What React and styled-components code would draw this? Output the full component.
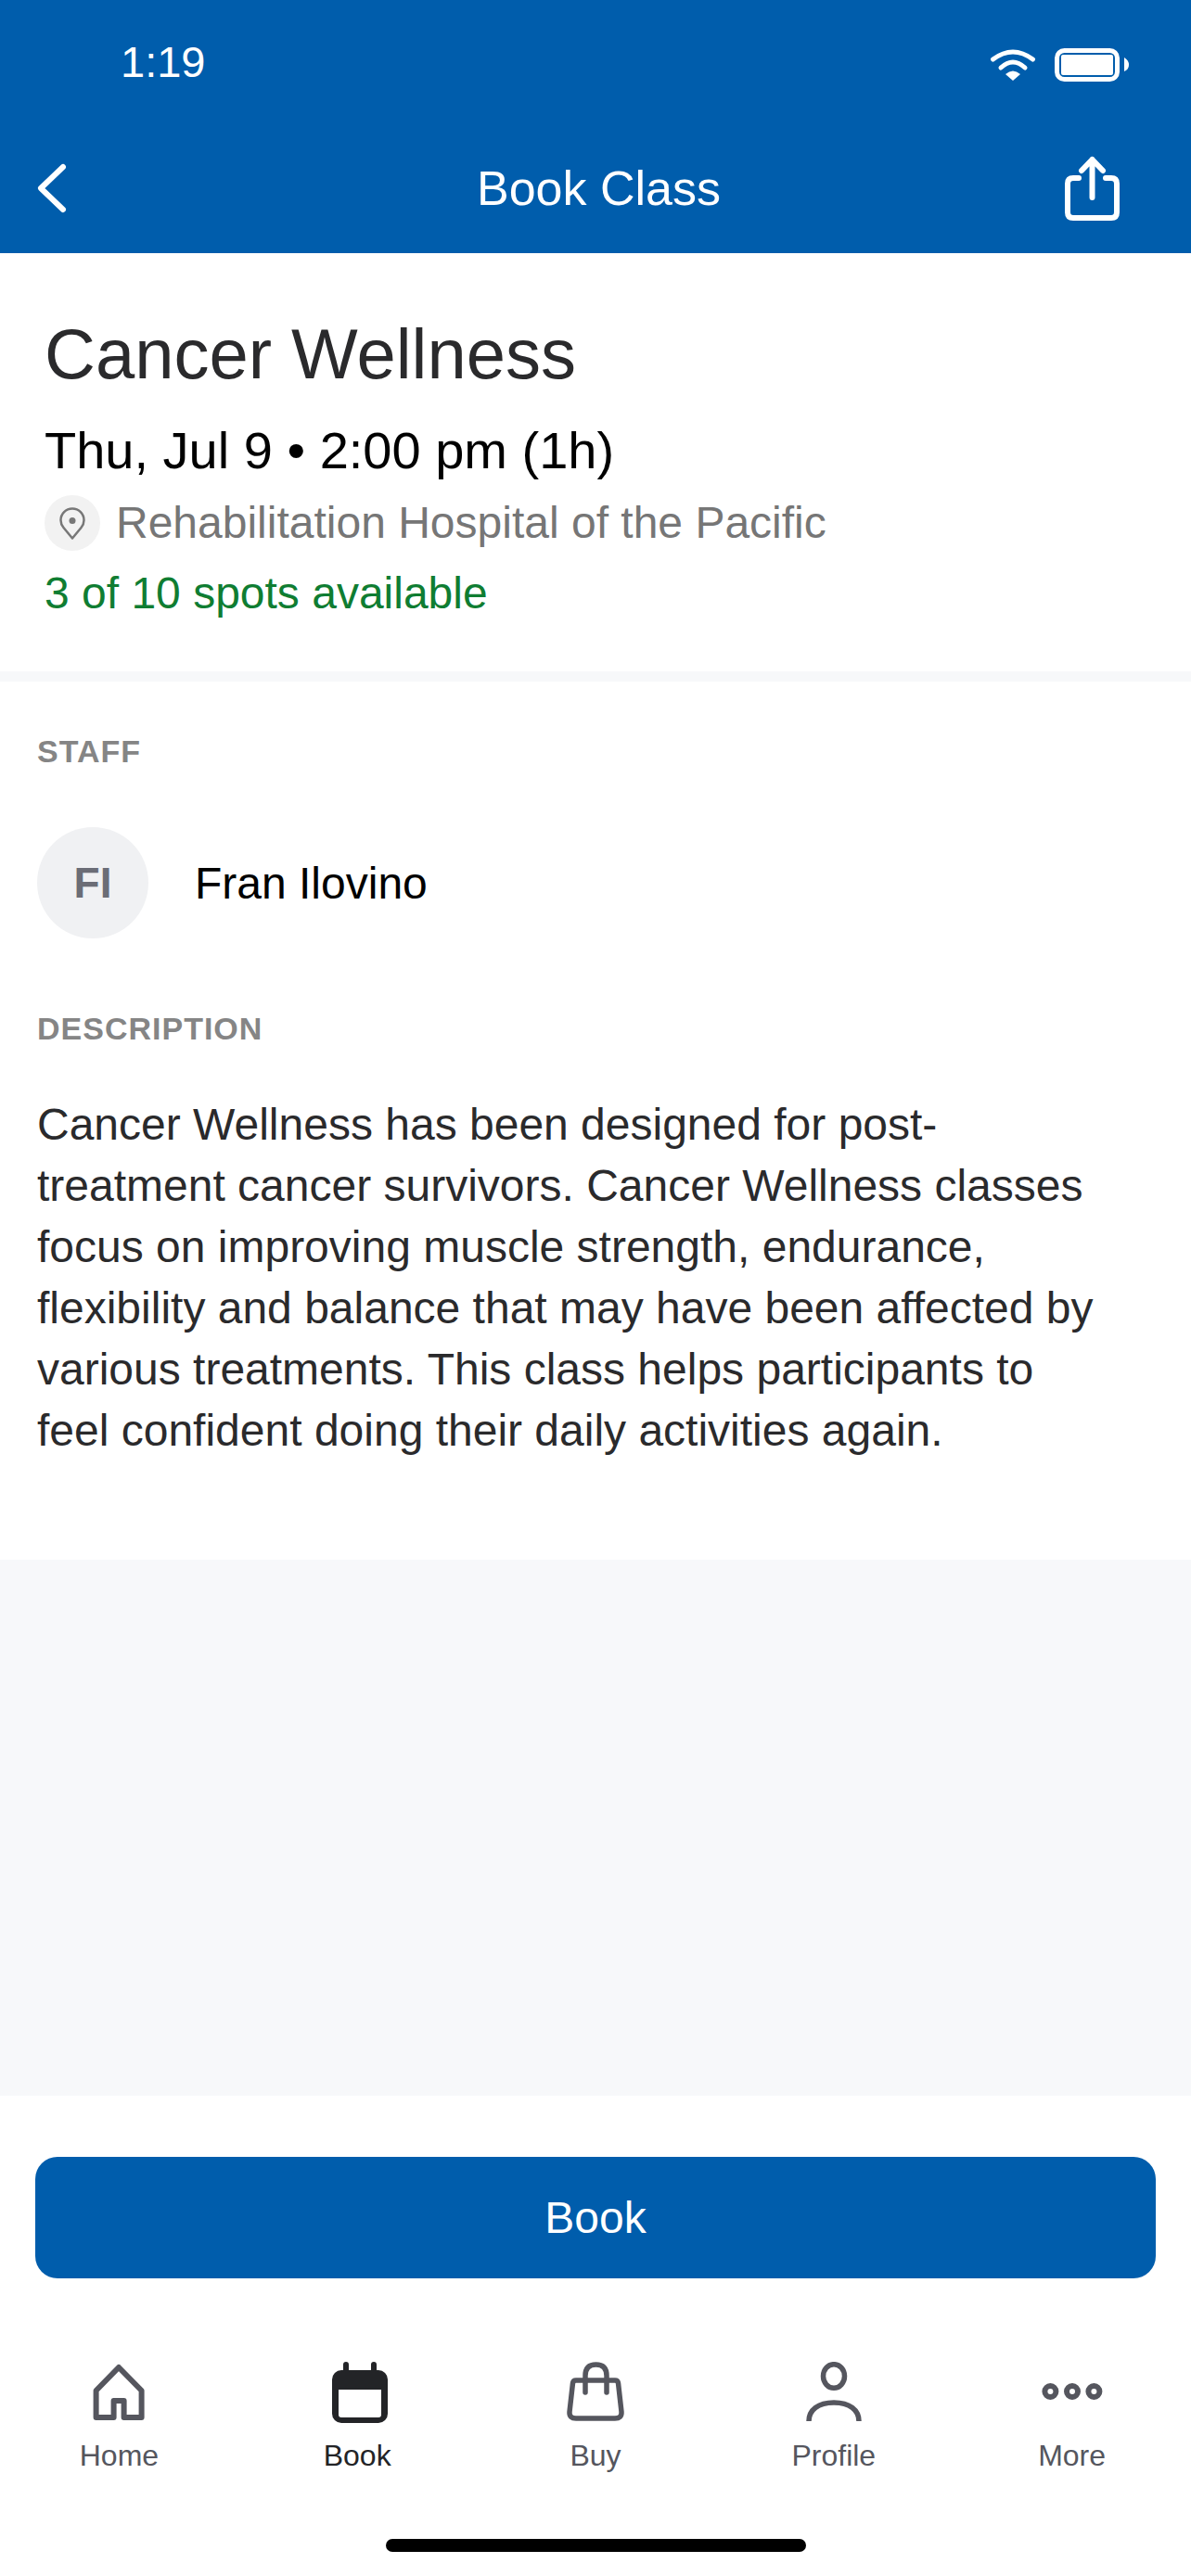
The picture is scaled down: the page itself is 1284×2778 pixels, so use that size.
import React from 'react';
import styled, { createGlobalStyle } from 'styled-components';

const GlobalStyle = createGlobalStyle`
    html, body {
        margin: 0;
        padding: 0;
        background: #ffffff;
    }
    body {
        font-family: "Liberation Sans", Arial, sans-serif;
    }
    * {
        box-sizing: border-box;
    }
`;

const Screen = styled.div`
    width: 1284px;
    height: 2778px;
    display: flex;
    flex-direction: column;
    background: #ffffff;
    overflow: hidden;
`;

const Header = styled.header`
    height: 273px;
    background: #005dac;
    color: #ffffff;
    display: flex;
    flex-direction: column;
`;

const StatusBar = styled.div`
    height: 132px;
    padding: 0 67px 0 130px;
    display: flex;
    align-items: center;
    justify-content: space-between;
`;

const Time = styled.span`
    font-size: 47px;
`;

const StatusIcons = styled.div`
    margin-top: 8px;
    display: flex;
    align-items: center;
    gap: 20px;
`;

const NavBar = styled.div`
    flex: 1;
    padding: 0 77px 0 38px;
    display: grid;
    grid-template-columns: 1fr auto 1fr;
    align-items: center;
`;

const NavTitle = styled.h1`
    margin: 0 0 0 46px;
    font-size: 52px;
    font-weight: 400;
`;

const ShareSlot = styled.div`
    display: flex;
    justify-content: flex-end;
`;

const ClassInfo = styled.section`
    height: 462px;
    padding: 66px 48px 0;
    border-bottom: 11px solid #f7f8fa;
`;

const ClassTitle = styled.h2`
    margin: 0;
    font-size: 76px;
    line-height: 86px;
    font-weight: 400;
    color: #2a2a2c;
`;

const ClassTime = styled.div`
    margin-top: 28px;
    font-size: 56px;
    line-height: 66px;
    color: #000000;
`;

const Location = styled.div`
    margin-top: 15px;
    display: flex;
    align-items: center;
    gap: 17px;
    font-size: 48px;
    line-height: 60px;
    color: #767676;
`;

const PinCircle = styled.span`
    width: 60px;
    height: 60px;
    border-radius: 50%;
    background: #f2f2f2;
    display: flex;
    align-items: center;
    justify-content: center;
`;

const Spots = styled.div`
    margin-top: 16px;
    font-size: 48px;
    line-height: 60px;
    color: #0f7d32;
`;

const Details = styled.section`
    height: 947px;
    padding: 55px 40px 0;
`;

const SectionLabel = styled.div`
    font-size: 34px;
    line-height: 40px;
    font-weight: 700;
    letter-spacing: 1px;
    color: #858585;
`;

const StaffRow = styled.div`
    margin: 62px 0 77px;
    display: flex;
    align-items: center;
    gap: 50px;
`;

const Avatar = styled.div`
    width: 120px;
    height: 120px;
    border-radius: 50%;
    background: #f0f1f3;
    color: #6b6d76;
    font-size: 46px;
    font-weight: 700;
    display: flex;
    align-items: center;
    justify-content: center;
`;

const StaffName = styled.span`
    font-size: 48px;
    color: #000000;
`;

const Description = styled.p`
    margin: 51px 0 0;
    font-size: 48px;
    line-height: 66px;
    color: #2a2a2c;
`;

const Spacer = styled.div`
    flex: 1;
    background: #f7f8fa;
`;

const Footer = styled.footer`
    height: 518px;
    padding: 66px 38px 0;
    display: flex;
    flex-direction: column;
`;

const BookButton = styled.button`
    width: 100%;
    height: 131px;
    flex-shrink: 0;
    border: 0;
    border-radius: 24px;
    background: #005dac;
    color: #ffffff;
    font-family: inherit;
    font-size: 48px;
`;

const TabBar = styled.nav`
    margin: 90px -38px 0;
    display: grid;
    grid-template-columns: repeat(5, 1fr);
`;

const Tab = styled.div`
    display: flex;
    flex-direction: column;
    align-items: center;
    color: ${({ $active }) => ($active ? '#232427' : '#55565e')};
    font-size: 32px;
    line-height: 36px;
`;

const TabIcon = styled.svg`
    display: block;
    margin-bottom: 17px;
`;

const HomeBar = styled.div`
    align-self: center;
    margin-top: 72px;
    width: 453px;
    height: 14px;
    flex-shrink: 0;
    border-radius: 7px;
    background: #000000;
`;

const tabs = [
    {
        label: 'Home',
        icon: (
            <path
                d="M35 6 L59.6 31 V60 H40.6 V42 H29.6 V60 H10.6 V31 Z"
                fill="none"
                stroke="currentColor"
                strokeWidth="6"
                strokeLinejoin="round"
            />
        ),
    },
    {
        label: 'Book',
        active: true,
        icon: (
            <>
                <path d="M23 3 V10 M53 3 V10" stroke="currentColor" strokeWidth="6" strokeLinecap="round" />
                <rect x="8" y="9" width="60" height="57" rx="10" fill="currentColor" />
                <path d="M15 30 H61 V57 Q61 60 58 60 H18 Q15 60 15 57 Z" fill="#ffffff" />
            </>
        ),
    },
    {
        label: 'Buy',
        icon: (
            <g fill="none" stroke="currentColor" strokeWidth="5.5" strokeLinecap="round" strokeLinejoin="round">
                <path d="M14 20 H56 Q59 20 59.5 23 L63 54 Q63.5 61 56 61 H14 Q6.5 61 7 54 L10.5 23 Q11 20 14 20 Z" />
                <path d="M24 33 V15 Q24 3 35.5 3 Q47 3 47 15 V33" />
            </g>
        ),
    },
    {
        label: 'Profile',
        icon: (
            <g fill="none" stroke="currentColor" strokeWidth="5.5">
                <ellipse cx="35" cy="15.5" rx="11.5" ry="12.8" />
                <path d="M8 64 C8 52 18 44 35 44 C52 44 62 52 62 64" />
            </g>
        ),
    },
    {
        label: 'More',
        icon: (
            <g fill="none" stroke="currentColor" strokeWidth="6">
                <circle cx="11.4" cy="32" r="6" />
                <circle cx="35" cy="32" r="6" />
                <circle cx="58.4" cy="32" r="6" />
            </g>
        ),
    },
];

const App = () => (
    <Screen>
        <GlobalStyle />
        <Header>
            <StatusBar>
                <Time>1:19</Time>
                <StatusIcons>
                    <svg width="50" height="34" viewBox="0 0 50 34" fill="none" stroke="#ffffff" strokeWidth="5" strokeLinecap="round">
                        <path d="M3.5 11 Q25 -5 46.5 11" />
                        <path d="M12 20 Q25 8 38 20" />
                        <path d="M25 34 L17 27 Q25 20 33 27 Z" fill="#ffffff" stroke="none" />
                    </svg>
                    <svg width="80" height="36" viewBox="0 0 80 36" fill="none">
                        <rect x="2.5" y="2.5" width="65" height="31" rx="8" stroke="#ffffff" strokeWidth="5" />
                        <rect x="7" y="7" width="56" height="22" rx="2" fill="#ffffff" />
                        <path d="M75 10 Q80 13 80 18 Q80 23 75 25 Z" fill="#ffffff" />
                    </svg>
                </StatusIcons>
            </StatusBar>
            <NavBar>
                <svg width="36" height="56" viewBox="0 0 36 56" fill="none" stroke="#ffffff" strokeWidth="6" strokeLinecap="round" strokeLinejoin="round">
                    <path d="M30 5 L6 28 L30 51" />
                </svg>
                <NavTitle>Book Class</NavTitle>
                <ShareSlot>
                    <svg width="59" height="70" viewBox="0 0 59 70" fill="none" stroke="#ffffff" strokeWidth="6" strokeLinecap="round" strokeLinejoin="round">
                        <path d="M29.5 45 V4 M18 16 L29.5 4 L41 16" />
                        <path d="M15 24 H9 Q3 24 3 30 V61 Q3 67 9 67 H50 Q56 67 56 61 V30 Q56 24 50 24 H44" />
                    </svg>
                </ShareSlot>
            </NavBar>
        </Header>
        <ClassInfo>
            <ClassTitle>Cancer Wellness</ClassTitle>
            <ClassTime>Thu, Jul 9 • 2:00 pm (1h)</ClassTime>
            <Location>
                <PinCircle>
                    <svg width="28" height="35" viewBox="0 0 28 35" fill="none" stroke="#777777" strokeWidth="2.5" strokeLinejoin="round">
                        <path d="M14 33.5 L4.5 22 C2.5 19.5 1.5 17 1.5 14 C1.5 7 7 1.5 14 1.5 C21 1.5 26.5 7 26.5 14 C26.5 17 25.5 19.5 23.5 22 Z" />
                        <circle cx="14" cy="14.5" r="3.5" fill="#777777" stroke="none" />
                    </svg>
                </PinCircle>
                Rehabilitation Hospital of the Pacific
            </Location>
            <Spots>3 of 10 spots available</Spots>
        </ClassInfo>
        <Details>
            <SectionLabel>STAFF</SectionLabel>
            <StaffRow>
                <Avatar>FI</Avatar>
                <StaffName>Fran Ilovino</StaffName>
            </StaffRow>
            <SectionLabel>DESCRIPTION</SectionLabel>
            <Description>
                Cancer Wellness has been designed for post-<br />
                treatment cancer survivors. Cancer Wellness classes<br />
                focus on improving muscle strength, endurance,<br />
                flexibility and balance that may have been affected by<br />
                various treatments. This class helps participants to<br />
                feel confident doing their daily activities again.
            </Description>
        </Details>
        <Spacer />
        <Footer>
            <BookButton>Book</BookButton>
            <TabBar>
                {tabs.map(({ label, icon, active }) => (
                    <Tab key={label} $active={active}>
                        <TabIcon width="70" height="66" viewBox="0 0 70 66">{icon}</TabIcon>
                        {label}
                    </Tab>
                ))}
            </TabBar>
            <HomeBar />
        </Footer>
    </Screen>
);

export default App;
